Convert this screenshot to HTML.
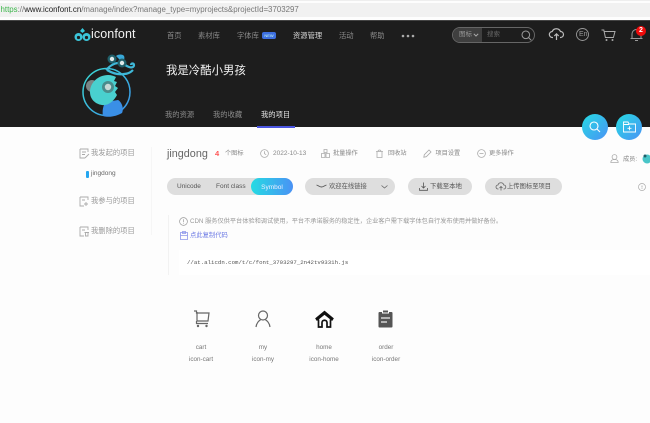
<!DOCTYPE html>
<html lang="zh"><head><meta charset="utf-8"><style>
html,body{margin:0;padding:0;width:650px;height:423px;overflow:hidden;background:#fdfdfd}
body{position:relative;font-family:"Liberation Sans","Noto Sans CJK SC",sans-serif}
#w{position:absolute;left:0;top:0;width:650px;height:423px;filter:blur(.3px);overflow:hidden}
.a{position:absolute;white-space:nowrap;line-height:1}
svg{position:absolute;overflow:visible}
.pill{position:absolute;background:#dedede;border-radius:9px;height:17px}
</style></head><body><div id="w">
<div class="a" style="left:0;top:0;width:650px;height:1px;background:#eee"></div>
<div class="a" style="left:0;top:3px;width:650px;height:14px;background:#f1f1f1"></div>
<div class="a" style="left:.5px;top:6px;font-size:7.900px;color:#777"><span style="color:#3bb54a">https</span>://<span style="color:#222">www.iconfont.cn</span>/manage/index?manage_type=myprojects&amp;projectId=3703297</div>
<div class="a" style="left:0;top:20px;width:650px;height:107px;background:#1d1d1d;border-top:1px solid #444;box-sizing:border-box"></div>

<!-- logo -->
<svg style="left:74px;top:27px" width="17" height="16" viewBox="0 0 17 16"><path d="M8.500 1l2.500 3-2.500 2-2.500-2z" fill="#35c7d9"/><circle cx="4.500" cy="10" r="4" fill="#3cc4d8"/><circle cx="12.500" cy="10" r="4" fill="#3cc4d8"/><circle cx="4.500" cy="10.500" r="1.600" fill="#1d1d1d"/><circle cx="12.500" cy="10.500" r="1.600" fill="#1d1d1d"/></svg>
<div class="a" style="left:91px;top:28px;font-size:12.500px;color:#f2f2f2;letter-spacing:.1px">iconfont</div>
<div class="a" style="left:167px;top:31.700px;font-size:7.300px;color:#8a8a8a">首页</div>
<div class="a" style="left:198px;top:31.700px;font-size:7.300px;color:#8a8a8a">素材库</div>
<div class="a" style="left:237px;top:31.700px;font-size:7.300px;color:#8a8a8a">字体库</div>
<div class="a" style="left:262px;top:31.500px;width:14px;height:7px;border-radius:2px;background:#3d6fe0;color:#cfe;font-size:4px;line-height:7px;text-align:center">NEW</div>
<div class="a" style="left:293px;top:31.700px;font-size:7.300px;color:#d8d8d8">资源管理</div>
<div class="a" style="left:339px;top:31.700px;font-size:7.300px;color:#8a8a8a">活动</div>
<div class="a" style="left:370px;top:31.700px;font-size:7.300px;color:#8a8a8a">帮助</div>
<svg style="left:400px;top:34px" width="16" height="4"><circle cx="3" cy="2" r="1.300" fill="#aaa"/><circle cx="8" cy="2" r="1.300" fill="#aaa"/><circle cx="13" cy="2" r="1.300" fill="#aaa"/></svg>

<!-- search -->
<div class="a" style="left:452px;top:27px;width:83px;height:16px;border:1px solid #666;border-radius:9px;box-sizing:border-box;overflow:hidden"><div style="position:absolute;left:0;top:0;width:29px;height:16px;background:#3f3f3f"></div></div>
<div class="a" style="left:459px;top:32px;font-size:6.500px;color:#999">图标</div>
<svg style="left:473px;top:33px" width="6" height="4"><path d="M.8.8L3 3 5.200.8" fill="none" stroke="#aaa"/></svg>
<div class="a" style="left:487px;top:32px;font-size:6.500px;color:#666">搜索</div>
<svg style="left:521px;top:30px" width="11" height="11"><circle cx="4.800" cy="4.800" r="3.800" fill="none" stroke="#999"/><path d="M7.500 7.500l2.800 2.800" stroke="#999"/></svg>
<!-- top icons -->
<svg style="left:549px;top:28px" width="15" height="13"><path d="M4 9.500H3.500a3 3 0 0 1-.3-6A4.500 4.500 0 0 1 11.500 3.500a3 3 0 0 1 0 6H11M7.500 12V6M5.300 8l2.200-2.200L9.700 8" fill="none" stroke="#bbb" stroke-width="1.200"/></svg>
<svg style="left:576px;top:28px" width="13" height="13"><circle cx="6.500" cy="6.500" r="6" fill="none" stroke="#999" stroke-width=".9"/></svg>
<div class="a" style="left:579px;top:31px;font-size:7px;color:#999">En</div>
<svg style="left:601px;top:29px" width="15" height="13"><path d="M.5 1h2.300l1.600 7.500h8L14 2.500H3.300" fill="none" stroke="#aaa" stroke-width="1"/><circle cx="5.500" cy="11" r="1" fill="#aaa"/><circle cx="11.500" cy="11" r="1" fill="#aaa"/></svg>
<svg style="left:630px;top:28px" width="13" height="14"><path d="M2 10.500V6a4.500 4.500 0 0 1 9 0v4.500zM.5 10.500h12M5 12.500h3" fill="none" stroke="#999" stroke-width="1"/></svg>
<div class="a" style="left:636px;top:25.500px;width:10px;height:10px;border-radius:50%;background:#f00b0b;color:#fff;font-size:7px;line-height:10px;text-align:center;font-weight:bold">2</div>

<!-- avatar -->
<svg style="left:78px;top:50px" width="60" height="72" viewBox="0 0 60 72">
<defs><linearGradient id="g" x1="0" y1="0" x2="1" y2="1"><stop offset="0" stop-color="#3bdcd4"/><stop offset="1" stop-color="#3a90e8"/></linearGradient></defs>
<circle cx="28.500" cy="42" r="23.500" fill="none" stroke="url(#g)" stroke-width="1.500"/>
<circle cx="14" cy="36" r="6" fill="#7a8585"/>
<path d="M25 66c-1-5 0-11 3-14l12-2c4 2 6 9 4 13-5 3-13 5-19 3z" fill="#3a8fe6"/>
<path d="M12 42c0-10 9-17 18-17 3 0 6 1 8 2l-2 4 3 1-2 4 3 2-3 4 2 3c-3 6-9 11-15 10-7-1-12-6-12-13z" fill="#49d0cf"/>
<circle cx="30" cy="37" r="6" fill="#4a8c8c"/><circle cx="30" cy="37" r="3.200" fill="#c9d9d6"/>
<path d="M28 20c3-3 7-7 13-7 4 0 7 3 10 4 3 1 5 0 5-2 0-2-3-2-3 0" fill="none" stroke="#3fb8d8" stroke-width="2.200"/>
<path d="M29 20c5 3 11 5 17 4 4 0 7-2 9-4" fill="none" stroke="#3fb8d8" stroke-width="2.200"/>
<path d="M38 6c2-2 7-2 8 0s0 5-2 6z" fill="#38a8d8"/>
<circle cx="34" cy="9" r="4.500" fill="#1f5f6a"/><circle cx="34" cy="9" r="2.200" fill="#dfe9e9"/>
<circle cx="44" cy="13" r="4.500" fill="#1f5f6a"/><circle cx="44" cy="13" r="2.200" fill="#dfe9e9"/>
</svg>
<div class="a" style="left:166px;top:66px;font-size:11.400px;color:#f2f2f2">我是冷酷小男孩</div>
<div class="a" style="left:165px;top:110.500px;font-size:7.300px;color:#8c8c8c">我的资源</div>
<div class="a" style="left:213px;top:110.500px;font-size:7.300px;color:#8c8c8c">我的收藏</div>
<div class="a" style="left:261px;top:110.500px;font-size:7.300px;color:#e6e6e6">我的项目</div>
<div class="a" style="left:257px;top:126px;width:38px;height:1.500px;background:#4a55e0"></div>

<!-- floating buttons -->
<div class="a" style="left:582px;top:114px;width:26px;height:26px;border-radius:50%;background:linear-gradient(135deg,#25dbe3,#4a92f5)"></div>
<svg style="left:589px;top:121px" width="12" height="12"><circle cx="5" cy="5" r="4" fill="none" stroke="#fff" stroke-width="1.100"/><path d="M8 8l3 3" stroke="#fff" stroke-width="1.100"/></svg>
<div class="a" style="left:616px;top:114px;width:26px;height:26px;border-radius:50%;background:linear-gradient(135deg,#25dbe3,#4a92f5)"></div>
<svg style="left:623px;top:121px" width="13" height="12"><path d="M.5 11V1h4.500l1 2h6.500v8zM.5 3.500h5.500M6.500 5.300v4M4.500 7.300h4" fill="none" stroke="#fff" stroke-width=".9"/></svg>

<!-- sidebar -->
<svg style="left:79px;top:148px" width="11" height="11"><path d="M1 1h8v3M1 1v9h5M3 4h4M3 6.500h3M6 10l4-4" fill="none" stroke="#aaa" stroke-width=".9"/></svg>
<div class="a" style="left:91px;top:149px;font-size:7.300px;color:#9a9a9a">我发起的项目</div>
<div class="a" style="left:86px;top:170.500px;width:2.500px;height:7px;border-radius:1px;background:#25a6f0"></div>
<div class="a" style="left:91px;top:170.500px;font-size:6.500px;color:#666">jingdong</div>
<svg style="left:79px;top:196px" width="11" height="11"><path d="M1 1h8v3M1 1v9h4M3 4h3M7 6v4M5 8h4" fill="none" stroke="#aaa" stroke-width=".9"/></svg>
<div class="a" style="left:91px;top:197px;font-size:7.300px;color:#9a9a9a">我参与的项目</div>
<svg style="left:79px;top:226px" width="11" height="11"><path d="M1 1h8v3M1 1v9h4M3 4h3M5.500 6.500h4.500M6.500 6.500v3.500h2.500v-3.500" fill="none" stroke="#aaa" stroke-width=".9"/></svg>
<div class="a" style="left:91px;top:226.500px;font-size:7.300px;color:#9a9a9a">我删除的项目</div>
<div class="a" style="left:151px;top:147px;width:1px;height:88px;background:#f6f6f6"></div>

<!-- title row -->
<div class="a" style="left:167px;top:149px;font-size:10.800px;color:#666">jingdong</div>
<div class="a" style="left:215px;top:150px;font-size:7.500px;color:#f55;font-weight:bold">4</div>
<div class="a" style="left:225px;top:151.200px;font-size:6.200px;color:#888">个图标</div>
<svg style="left:260px;top:149px" width="9" height="9"><circle cx="4.500" cy="4.500" r="3.900" fill="none" stroke="#aaa" stroke-width=".8"/><path d="M4.500 2.200v2.500l1.700 1" fill="none" stroke="#aaa" stroke-width=".8"/></svg>
<div class="a" style="left:273px;top:151.200px;font-size:6.500px;color:#888">2022-10-13</div>
<svg style="left:321px;top:149px" width="9" height="9"><path d="M3 .5h3v3H3zM.5 4.500h3.500v4H.5zM5 4.500h3.500v4H5z" fill="none" stroke="#aaa" stroke-width=".8"/></svg>
<div class="a" style="left:333px;top:151.200px;font-size:6.200px;color:#888">批量操作</div>
<svg style="left:375px;top:149px" width="9" height="9"><path d="M1 2.500h7M2 2.500v6h5v-6M3 2.500c0-2 3-2 3 0" fill="none" stroke="#aaa" stroke-width=".8"/></svg>
<div class="a" style="left:388px;top:151.200px;font-size:6.200px;color:#888">回收站</div>
<svg style="left:423px;top:149px" width="9" height="9"><path d="M.8 8.200l.5-2.500L6 1l2 2-4.700 4.700z" fill="none" stroke="#aaa" stroke-width=".8"/></svg>
<div class="a" style="left:435.500px;top:151.200px;font-size:6.200px;color:#888">项目设置</div>
<svg style="left:477px;top:149px" width="9" height="9"><circle cx="4.500" cy="4.500" r="3.900" fill="none" stroke="#aaa" stroke-width=".8"/><path d="M2.500 4.500h4" stroke="#aaa" stroke-width=".8"/></svg>
<div class="a" style="left:489px;top:151.200px;font-size:6.200px;color:#888">更多操作</div>
<svg style="left:610px;top:154px" width="9" height="9"><circle cx="4.500" cy="3" r="2.400" fill="none" stroke="#aaa" stroke-width=".8"/><path d="M.8 8.500c0-2.500 2-3 3.700-3s3.700.5 3.700 3z" fill="none" stroke="#aaa" stroke-width=".8"/></svg>
<div class="a" style="left:623px;top:156.500px;font-size:6.200px;color:#888">成员:</div>
<svg style="left:642px;top:153px" width="8" height="11"><circle cx="5" cy="6" r="4.500" fill="#49c5c8"/><circle cx="3" cy="3" r="1.500" fill="#1f5f6a"/></svg>

<!-- pills row -->
<div class="pill" style="left:167px;top:178px;width:126px"></div>
<div class="a" style="left:177px;top:184px;font-size:6.500px;color:#555">Unicode</div>
<div class="a" style="left:216px;top:184px;font-size:6.500px;color:#555">Font class</div>
<div class="a" style="left:251px;top:178px;width:42px;height:17px;border-radius:9px;background:linear-gradient(90deg,#25dbe3,#4a92f5);color:#eef;font-size:6.500px;line-height:19px;text-align:center">Symbol</div>
<div class="pill" style="left:305px;top:178px;width:90px"></div>
<svg style="left:316px;top:184px" width="11" height="5"><path d="M.5 1c2 .5 3 2 5 2s3-1.500 5-2" fill="none" stroke="#555" stroke-width=".9"/></svg>
<div class="a" style="left:329px;top:184px;font-size:6.300px;color:#555">欢迎在线链接</div>
<svg style="left:381px;top:185px" width="7" height="4"><path d="M.5.500L3.500 3l3-2.500" fill="none" stroke="#666" stroke-width=".8"/></svg>
<div class="pill" style="left:408px;top:178px;width:64px"></div>
<svg style="left:419px;top:182px" width="9" height="9"><path d="M4.500.5v5.500M2.500 4l2 2 2-2M.5 6v2.300h8V6" fill="none" stroke="#555" stroke-width=".8"/></svg>
<div class="a" style="left:430px;top:184px;font-size:6.400px;color:#555">下载至本地</div>
<div class="pill" style="left:485px;top:178px;width:77px"></div>
<svg style="left:496px;top:182px" width="10" height="9"><path d="M2.500 7H2a2 2 0 0 1 0-4 3 3 0 0 1 5.800 0 2 2 0 0 1 0 4h-.3M5 8.500V4.500M3.500 6L5 4.500 6.500 6" fill="none" stroke="#666" stroke-width=".8"/></svg>
<div class="a" style="left:507px;top:184px;font-size:6.300px;color:#555">上传图标至项目</div>
<svg style="left:638px;top:183px" width="8" height="8"><circle cx="4" cy="4" r="3.500" fill="none" stroke="#aaa" stroke-width=".7"/><path d="M4 2.500v2M4 5.300v.7" stroke="#999" stroke-width=".7"/></svg>

<!-- code notice -->
<div class="a" style="left:168px;top:215px;width:1px;height:60px;background:#f2f2f2"></div>
<svg style="left:179px;top:217px" width="9" height="9"><circle cx="4.500" cy="4.500" r="3.900" fill="none" stroke="#999" stroke-width=".7"/><path d="M4.500 2.200v2.800M4.500 5.800v.8" stroke="#999" stroke-width=".7"/></svg>
<div class="a" style="left:190px;top:219px;font-size:6.200px;color:#999">CDN 服务仅供平台体验和调试使用，平台不承诺服务的稳定性，企业客户需下载字体包自行发布使用并做好备份。</div>
<svg style="left:180px;top:231px" width="8" height="9"><path d="M.5 1.500h7v7h-7zM2.500 .5h3v2h-3zM.5 4.500h7" fill="none" stroke="#8c96ea" stroke-width=".8"/></svg>
<div class="a" style="left:190px;top:233px;font-size:6.300px;color:#6a78e4">点此复制代码</div>
<div class="a" style="left:179px;top:250px;width:471px;height:25px;background:#fff"></div>
<div class="a" style="left:187px;top:260px;font-family:'Liberation Mono',monospace;font-size:5.720px;color:#555">//at.alicdn.com/t/c/font_3703297_2n42tv9331h.js</div>

<!-- icons -->
<svg style="left:193px;top:310px" width="17" height="18" viewBox="0 0 17 18"><path d="M1 1h2.500v2h12.500l-1 8h-11l0-9M3.500 11v2.500h11.500" fill="none" stroke="#666" stroke-width="1.200"/><circle cx="5" cy="16" r="1.200" fill="#666"/><circle cx="13.500" cy="16" r="1.200" fill="#666"/></svg>
<svg style="left:255px;top:310px" width="16" height="18" viewBox="0 0 16 18"><circle cx="8" cy="5.500" r="4.500" fill="none" stroke="#666" stroke-width="1.200"/><path d="M1 17c.5-4 3-6.500 4.500-7M15 17c-.5-4-3-6.500-4.500-7" fill="none" stroke="#666" stroke-width="1.200"/></svg>
<svg style="left:315px;top:310px" width="19" height="18" viewBox="0 0 19 18"><path d="M1 8.500L9.500 1.500 18 8.500l-1 1.500L9.500 4 2 10z" fill="#111" stroke="#111" stroke-width="1.300"/><path d="M3.500 9.500V17H7v-4.500c0-3 5-3 5 0V17h3.500V9.500" fill="none" stroke="#111" stroke-width="1.700"/></svg>
<svg style="left:378px;top:310px" width="15" height="18" viewBox="0 0 15 18"><path d="M1.500 2H4v1.500h7V2h2.500A1 1 0 0 1 14.500 3v13.500a1 1 0 0 1-1 1h-12a1 1 0 0 1-1-1V3a1 1 0 0 1 1-1z" fill="#555"/><rect x="5" y=".500" width="5" height="2" fill="#555"/><path d="M3 8h9M3 12h6" stroke="#eee" stroke-width="1.300"/></svg>
<div class="a" style="left:171px;top:345px;width:60px;text-align:center;font-size:6.300px;color:#777">cart</div>
<div class="a" style="left:171px;top:357px;width:60px;text-align:center;font-size:6.300px;color:#777">icon-cart</div>
<div class="a" style="left:233px;top:345px;width:60px;text-align:center;font-size:6.300px;color:#777">my</div>
<div class="a" style="left:233px;top:357px;width:60px;text-align:center;font-size:6.300px;color:#777">icon-my</div>
<div class="a" style="left:294px;top:345px;width:60px;text-align:center;font-size:6.300px;color:#777">home</div>
<div class="a" style="left:294px;top:357px;width:60px;text-align:center;font-size:6.300px;color:#777">icon-home</div>
<div class="a" style="left:356px;top:345px;width:60px;text-align:center;font-size:6.300px;color:#777">order</div>
<div class="a" style="left:356px;top:357px;width:60px;text-align:center;font-size:6.300px;color:#777">icon-order</div>
</div></body></html>
